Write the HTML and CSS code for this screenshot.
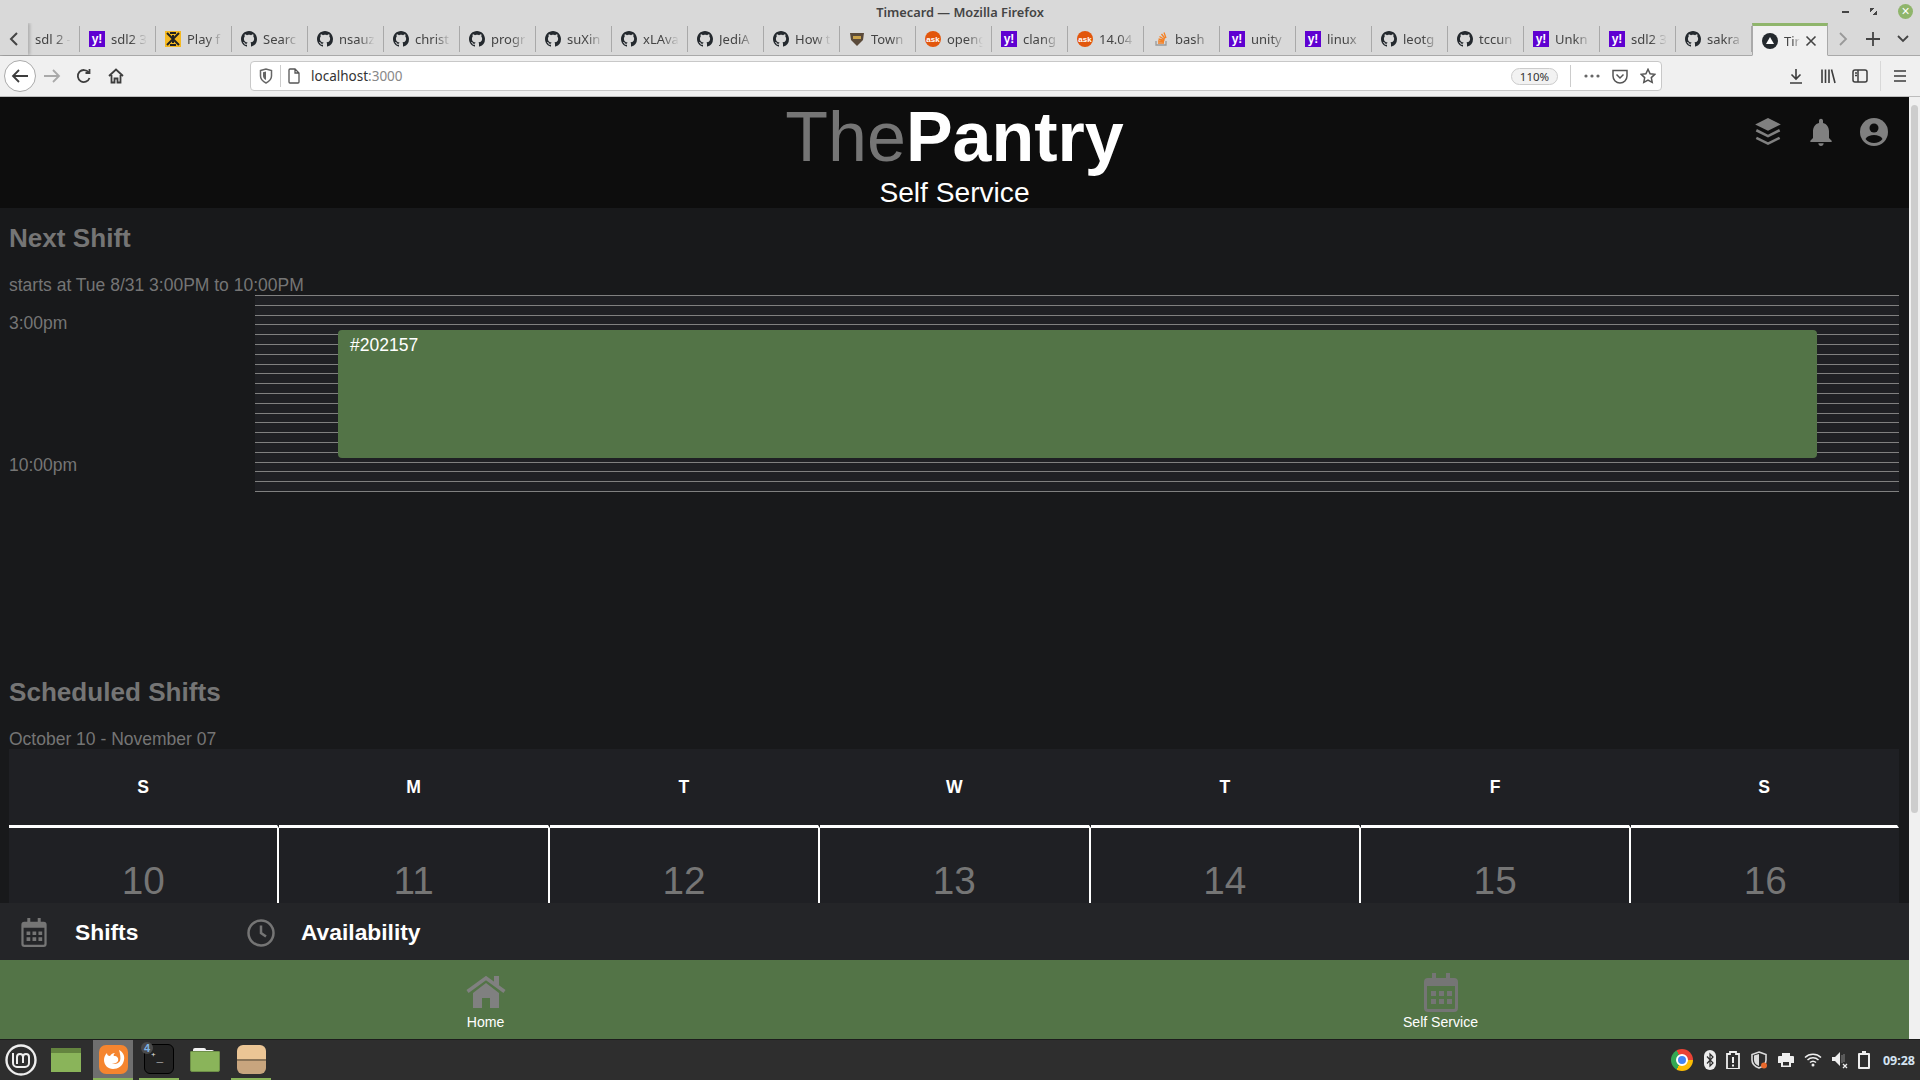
FILE: index.html
```html
<!DOCTYPE html>
<html lang="en">
<head>
    <meta charset="UTF-8">
    <meta name="viewport" content="width=device-width, initial-scale=1.0">
    <title>Timecard</title>
    <link rel="stylesheet" href="styles.css">
</head>
<body>
    <svg class="defs" width="0" height="0">
        <symbol id="gh" viewBox="0 0 16 16"><path d="M8 0C3.58 0 0 3.58 0 8c0 3.54 2.29 6.53 5.47 7.59.4.07.55-.17.55-.38 0-.19-.01-.82-.01-1.49-2.01.37-2.53-.49-2.69-.94-.09-.23-.48-.94-.82-1.13-.28-.15-.68-.52-.01-.53.63-.01 1.08.58 1.23.82.72 1.21 1.87.87 2.33.66.07-.52.28-.87.51-1.07-1.78-.2-3.64-.89-3.64-3.95 0-.87.31-1.59.82-2.15-.08-.2-.36-1.02.08-2.12 0 0 .67-.21 2.2.82.64-.18 1.32-.27 2-.27.68 0 1.36.09 2 .27 1.53-1.04 2.2-.82 2.2-.82.44 1.1.16 1.92.08 2.12.51.56.82 1.27.82 2.15 0 3.07-1.87 3.75-3.65 3.95.29.25.54.73.54 1.48 0 1.07-.01 1.93-.01 2.2 0 .21.15.46.55.38A8.013 8.013 0 0016 8c0-4.42-3.58-8-8-8z"/></symbol>
        <symbol id="calendar" viewBox="0 0 34 39">
            <path d="M8 0h4v5h10V0h4v5h4a4 4 0 0 1 4 4v26a4 4 0 0 1-4 4H4a4 4 0 0 1-4-4V9a4 4 0 0 1 4-4h4zM3 13v22a1 1 0 0 0 1 1h26a1 1 0 0 0 1-1V13z" fill-rule="evenodd"/>
            <path d="M7 18h5v5H7zM15 18h5v5h-5zM23 18h5v5h-5zM7 26h5v5H7zM15 26h5v5h-5zM23 26h5v5h-5z"/>
        </symbol>
    </svg>

    <div class="titlebar">
        <span class="win-title">Timecard — Mozilla Firefox</span>
        <div class="win-btns">
            <span class="win-min"></span>
            <span class="win-max"></span>
            <span class="win-close">×</span>
        </div>
    </div>

    <div class="tabstrip">
        <div class="tab-scroll">
            <svg width="10" height="16" viewBox="0 0 10 16"><path d="M8 2 2 8l6 6" fill="none" stroke="#444" stroke-width="2"/></svg>
        </div>
        <div class="tab tab-first"><span class="tab-text">sdl 2 -</span></div>
        <div class="tab"><span class="fav fav-y">y!</span><span class="tab-text">sdl2 3</span></div>
        <div class="tab"><span class="fav fav-play"><svg width="16" height="16" viewBox="0 0 16 16"><path d="M2 2l12 12M14 2 2 14M5 2h6M5 14h6M8 4v8" stroke="#222" stroke-width="2" fill="none"/></svg></span><span class="tab-text">Play f</span></div>
        <div class="tab"><svg class="fav"><use href="#gh"/></svg><span class="tab-text">Searc</span></div>
        <div class="tab"><svg class="fav"><use href="#gh"/></svg><span class="tab-text">nsauz</span></div>
        <div class="tab"><svg class="fav"><use href="#gh"/></svg><span class="tab-text">christ</span></div>
        <div class="tab"><svg class="fav"><use href="#gh"/></svg><span class="tab-text">progr</span></div>
        <div class="tab"><svg class="fav"><use href="#gh"/></svg><span class="tab-text">suXin</span></div>
        <div class="tab"><svg class="fav"><use href="#gh"/></svg><span class="tab-text">xLAva</span></div>
        <div class="tab"><svg class="fav"><use href="#gh"/></svg><span class="tab-text">JediA</span></div>
        <div class="tab"><svg class="fav"><use href="#gh"/></svg><span class="tab-text">How t</span></div>
        <div class="tab"><span class="fav"><svg width="16" height="16" viewBox="0 0 16 16"><path d="M1 2h14l-1 7-6 6-6-6z" fill="#5a4a3a"/><path d="M4 5h8v3H4z" fill="#c9a24a"/></svg></span><span class="tab-text">Town</span></div>
        <div class="tab"><span class="fav fav-ask">ask</span><span class="tab-text">openg</span></div>
        <div class="tab"><span class="fav fav-y">y!</span><span class="tab-text">clang</span></div>
        <div class="tab"><span class="fav fav-ask">ask</span><span class="tab-text">14.04</span></div>
        <div class="tab"><span class="fav"><svg width="16" height="16" viewBox="0 0 16 16"><path d="M3 10v4h10v-4" fill="none" stroke="#999" stroke-width="1.3"/><path d="M5 12h6M5 10l6 .5M5.5 8l6 1.5M6.5 5.5l5 3M8.5 3l3.500 4.500M11 1.500l2 5.500" stroke="#f48024" stroke-width="1.3"/></svg></span><span class="tab-text">bash</span></div>
        <div class="tab"><span class="fav fav-y">y!</span><span class="tab-text">unity</span></div>
        <div class="tab"><span class="fav fav-y">y!</span><span class="tab-text">linux</span></div>
        <div class="tab"><svg class="fav"><use href="#gh"/></svg><span class="tab-text">leotg</span></div>
        <div class="tab"><svg class="fav"><use href="#gh"/></svg><span class="tab-text">tccun</span></div>
        <div class="tab"><span class="fav fav-y">y!</span><span class="tab-text">Unkn</span></div>
        <div class="tab"><span class="fav fav-y">y!</span><span class="tab-text">sdl2 3</span></div>
        <div class="tab"><svg class="fav"><use href="#gh"/></svg><span class="tab-text">sakra</span></div>
        <div class="tab tab-active">
            <span class="fav"><svg width="16" height="16" viewBox="0 0 16 16"><circle cx="8" cy="8" r="8"/><path d="M8 4l4 7H4z" fill="#fff"/></svg></span>
            <span class="tab-text tab-text-short">Tir</span>
            <svg class="tab-x" width="12" height="12" viewBox="0 0 12 12"><path d="M1.500 1.500l9 9M10.500 1.500l-9 9" stroke="#444" stroke-width="1.600"/></svg>
        </div>
        <div class="strip-btn">
            <svg width="10" height="16" viewBox="0 0 10 16"><path d="M2 2l6 6-6 6" fill="none" stroke="#999" stroke-width="1.800"/></svg>
        </div>
        <div class="strip-btn">
            <svg width="16" height="16" viewBox="0 0 16 16"><path d="M8 1v14M1 8h14" stroke="#444" stroke-width="1.800"/></svg>
        </div>
        <div class="strip-btn">
            <svg width="14" height="10" viewBox="0 0 14 10"><path d="M2 2l5 5 5-5" fill="none" stroke="#444" stroke-width="1.800"/></svg>
        </div>
    </div>

    <div class="toolbar">
        <div class="tb-btn tb-back">
            <svg width="18" height="16" viewBox="0 0 18 16"><path d="M8 2 2 8l6 6M2 8h15" fill="none" stroke="#3d3d3d" stroke-width="1.800"/></svg>
        </div>
        <div class="tb-btn">
            <svg width="18" height="16" viewBox="0 0 18 16"><path d="M10 2l6 6-6 6M16 8H1" fill="none" stroke="#a9a9a9" stroke-width="1.800"/></svg>
        </div>
        <div class="tb-btn">
            <svg width="16" height="16" viewBox="0 0 16 16"><path d="M13.500 10a6 6 0 1 1-.8-5.500M13.500 1v4h-4" fill="none" stroke="#3d3d3d" stroke-width="1.800"/></svg>
        </div>
        <div class="tb-btn">
            <svg width="16" height="16" viewBox="0 0 16 16"><path d="M1 8l7-6.500L15 8M3.500 7v7.500h3v-4h3v4h3V7" fill="none" stroke="#3d3d3d" stroke-width="1.800"/></svg>
        </div>
        <div class="urlbar">
            <svg class="url-shield" width="14" height="16" viewBox="0 0 14 16"><path d="M1.500 2.500 7 1l5.500 1.500V8c0 3-2.500 5.500-5.500 7C4 13.500 1.500 11 1.500 8z" fill="none" stroke="#666" stroke-width="1.500"/><path d="M7 3.500V12C5 11 4 9.500 4 8V4.300z" fill="#666"/></svg>
            <span class="url-sep"></span>
            <svg class="url-page" width="14" height="16" viewBox="0 0 14 16"><path d="M2 2a1 1 0 0 1 1-1h5l4 4v9a1 1 0 0 1-1 1H3a1 1 0 0 1-1-1zM8 1v4h4" fill="none" stroke="#555" stroke-width="1.300"/></svg>
            <span class="url-text">localhost<span class="url-port">:3000</span></span>
            <span class="url-zoom">110%</span>
            <span class="url-sep url-sep-right"></span>
            <svg class="url-dots" width="16" height="4" viewBox="0 0 16 4"><circle cx="2" cy="2" r="1.600"/><circle cx="8" cy="2" r="1.600"/><circle cx="14" cy="2" r="1.600"/></svg>
            <svg class="url-pocket" width="16" height="16" viewBox="0 0 16 16"><path d="M1 2.500h14V8a7 7 0 0 1-14 0z" fill="none" stroke="#555" stroke-width="1.500"/><path d="M4.500 6.500 8 10l3.500-3.500" fill="none" stroke="#555" stroke-width="1.500"/></svg>
            <svg class="url-star" width="16" height="16" viewBox="0 0 16 16"><path d="M8 1.300l2.100 4.400 4.700.6-3.500 3.300.9 4.800L8 12l-4.200 2.400.9-4.800L1.200 6.300l4.700-.6z" fill="none" stroke="#555" stroke-width="1.500"/></svg>
        </div>
        <div class="tb-btn tb-download">
            <svg width="16" height="16" viewBox="0 0 16 16"><path d="M8 1v10M3.500 6.500 8 11l4.500-4.500M2 15h12" fill="none" stroke="#3d3d3d" stroke-width="1.600"/></svg>
        </div>
        <div class="tb-btn">
            <svg width="16" height="16" viewBox="0 0 16 16"><path d="M2 1.500V15M5.500 1.500V15M9 1.500V15M11.500 1.500 15 15" fill="none" stroke="#3d3d3d" stroke-width="1.600"/></svg>
        </div>
        <div class="tb-btn">
            <svg width="16" height="16" viewBox="0 0 16 16"><rect x="1" y="2" width="14" height="12" rx="2" fill="none" stroke="#3d3d3d" stroke-width="1.500"/><path d="M6 2v12M3 5h2M3 7.500h2" stroke="#3d3d3d" stroke-width="1.500"/></svg>
        </div>
        <span class="tb-sep"></span>
        <div class="tb-btn tb-menu">
            <svg width="14" height="12" viewBox="0 0 14 12"><path d="M1 1h12M1 6h12M1 11h12" stroke="#3d3d3d" stroke-width="1.600"/></svg>
        </div>
    </div>

    <div class="viewport">
        <div class="app">
            <header class="app-header">
                <div class="brand">
                    <h1 class="logo">The<b>Pantry</b></h1>
                    <div class="logo-sub">Self Service</div>
                </div>
                <div class="head-icons">
                    <svg class="head-icon" viewBox="0 0 24 24"><path d="M12 0l11 5.500L12 11 1 5.500z"/><path d="M2 10.500l10 5 10-5M2 17l10 5 10-5" fill="none" stroke="#808080" stroke-width="2.200"/></svg>
                    <svg class="head-icon" viewBox="3.500 1.500 17 21"><path d="M12 22.500c1.100 0 2-.9 2-2h-4c0 1.100.9 2 2 2zm6-6v-5c0-3.070-1.630-5.640-4.500-6.320V3.500c0-.83-.67-1.500-1.500-1.500s-1.500.67-1.500 1.500v1.680C7.640 5.860 6 8.420 6 11.500v5l-2 2v1h16v-1z"/></svg>
                    <svg class="head-icon" viewBox="0 0 28 28"><circle cx="14" cy="14" r="14"/><circle cx="14" cy="10" r="4.500" fill="#0d0d0d"/><path d="M5.500 21c1.500-3 5-4 8.500-4s7 1 8.500 4c-2 2.500-5 4-8.500 4s-6.500-1.500-8.500-4z" fill="#0d0d0d"/></svg>
                </div>
            </header>

            <main class="content">
                <h2 class="section-title">Next Shift</h2>
                <p class="section-sub">starts at Tue 8/31 3:00PM to 10:00PM</p>
                <div class="shift-row">
                    <div class="shift-times">
                        <div class="time-start">3:00pm</div>
                        <div class="time-end">10:00pm</div>
                    </div>
                    <div class="shift-chart">
                        <div class="shift-block">#202157</div>
                    </div>
                </div>

                <h2 class="section-title section-gap">Scheduled Shifts</h2>
                <p class="section-sub">October 10 - November 07</p>
                <div class="calendar">
                    <div class="cal-head">S</div>
                    <div class="cal-head">M</div>
                    <div class="cal-head">T</div>
                    <div class="cal-head">W</div>
                    <div class="cal-head">T</div>
                    <div class="cal-head">F</div>
                    <div class="cal-head">S</div>
                    <div class="cal-day">10</div>
                    <div class="cal-day">11</div>
                    <div class="cal-day">12</div>
                    <div class="cal-day">13</div>
                    <div class="cal-day">14</div>
                    <div class="cal-day">15</div>
                    <div class="cal-day">16</div>
                </div>
            </main>

            <div class="subnav">
                <div class="subnav-item subnav-shifts">
                    <svg class="subnav-cal"><use href="#calendar"/></svg>
                    <span>Shifts</span>
                </div>
                <div class="subnav-item">
                    <svg class="subnav-clock" viewBox="0 0 28 28"><circle cx="14" cy="14" r="12.500" fill="none" stroke="#757575" stroke-width="2.500"/><path d="M14 6.500V14l5 3.500" fill="none" stroke="#757575" stroke-width="2.500"/></svg>
                    <span>Availability</span>
                </div>
            </div>

            <nav class="bottom-nav">
                <div class="nav-item">
                    <svg class="nav-home" viewBox="0 0 40 32"><path d="M1.500 15.500 20 2l18.500 13.500" fill="none" stroke="#808080" stroke-width="3.500"/><path d="M28 0h5v9h-5z" fill="#808080"/><path d="M7 17 20 7l13 10v15h-9V22h-8v10H7z" fill="#808080"/></svg>
                    <span>Home</span>
                </div>
                <div class="nav-item">
                    <svg class="nav-cal"><use href="#calendar"/></svg>
                    <span>Self Service</span>
                </div>
            </nav>
        </div>
        <div class="scrollbar"><div class="scroll-thumb"></div></div>
    </div>

    <footer class="taskbar">
        <svg class="mint" width="32" height="32" viewBox="0 0 32 32"><circle cx="16" cy="16" r="14.500" fill="none" stroke="#eee" stroke-width="2.400"/><path d="M8 9v10a4 4 0 0 0 4 4h8a4 4 0 0 0 4-4v-6a3 3 0 0 0-6 0v6M18 13a3 3 0 0 0-6 0v7" fill="none" stroke="#eee" stroke-width="2"/></svg>
        <div class="task-slot task-files"><div class="files-window"></div></div>
        <div class="task-slot task-active task-run">
            <svg class="ff-icon" width="29" height="29" viewBox="0 0 29 29"><rect width="29" height="29" rx="7" fill="#f5852f"/><path d="M20 5c4 2 6 6 5 10-1 6-6 9-11 9-5 0-9-4-9-9 0-3 1-5 3-7 0 2 1 3 3 3 1-2 3-3 5-3-1 1-2 2-1 3 3 0 5 2 4 5-1 2-4 3-6 2 2 2 6 1 8-2 1-3 0-8-1-11z" fill="#fff"/></svg>
        </div>
        <div class="task-slot task-run task-term">
            <div class="term-icon">⁺_</div>
            <span class="term-badge">4</span>
        </div>
        <div class="task-slot task-folder"><div class="folder-tab"></div><div class="folder-body"></div></div>
        <div class="task-slot task-run task-box"><div class="box-icon"></div></div>
        <div class="tray">
            <div class="chrome"><div class="chrome-dot"></div></div>
            <svg width="12" height="20" viewBox="0 0 12 20"><rect width="12" height="20" rx="6" fill="#eee"/><path d="M3 6.500l6 6.500-3 3V4l3 3-6 6.500" fill="none" stroke="#2e2e2e" stroke-width="1.200"/></svg>
            <svg width="14" height="18" viewBox="0 0 14 18"><path d="M1 3h3V1h6v2h3v15H1z" fill="none" stroke="#eee" stroke-width="1.800"/><path d="M6 6h2v6H6zM6 13.500h2v2H6z" fill="#eee"/></svg>
            <svg width="18" height="18" viewBox="0 0 18 18"><path d="M9 1l7 2.500V9c0 4-3 6.500-7 8-4-1.500-7-4-7-8V3.500z" fill="none" stroke="#ddd" stroke-width="1.600"/><path d="M9 3v12c-3-1-5-3-5-6V4.500z" fill="#ddd"/><circle cx="14" cy="14.500" r="3" fill="#e9692c"/></svg>
            <svg width="16" height="14" viewBox="0 0 16 14"><path d="M4 0h8v3h3a1 1 0 0 1 1 1v6h-3v4H3v-4H0V4a1 1 0 0 1 1-1h3z" fill="#eee"/><path d="M5 9h6v3.500H5z" fill="#2e2e2e"/></svg>
            <svg width="18" height="14" viewBox="0 0 18 14"><path d="M1 4.500a11.500 11.500 0 0 1 16 0M3.500 7a8 8 0 0 1 11 0M6 9.500a4.500 4.500 0 0 1 6 0" fill="none" stroke="#eee" stroke-width="1.500"/><circle cx="9" cy="12" r="1.500" fill="#eee"/></svg>
            <svg width="16" height="18" viewBox="0 0 16 18"><path d="M0 6h3l5-5v14l-5-5H0z" fill="#eee"/><path d="M10 4v8M12 3v8" stroke="#777" stroke-width="1.200"/><path d="M11 13l4 4M15 13l-4 4" stroke="#eee" stroke-width="1.300"/></svg>
            <svg width="12" height="18" viewBox="0 0 12 18"><path d="M4 0h4v2h3a1 1 0 0 1 1 1v14a1 1 0 0 1-1 1H1a1 1 0 0 1-1-1V3a1 1 0 0 1 1-1h3z" fill="#eee"/><path d="M2 4h8v12H2z" fill="#2e2e2e"/></svg>
            <span class="clock">09:28</span>
        </div>
    </footer>
</body>
</html>
```

FILE: styles.css
```css
*{
    margin: 0;
    padding: 0;
    box-sizing: border-box;
}
html{
    font-size: 17.6px;
}
body{
    width: 1920px;
    height: 1080px;
    overflow: hidden;
    display: flex;
    flex-direction: column;
    font-family: "Liberation Sans", Arial, sans-serif;
    background-color: #18191b;
}
.defs{
    position: absolute;
}

/* window title */
.titlebar{
    height: 23px;
    flex: none;
    display: flex;
    align-items: center;
    justify-content: center;
    background-color: #d9d9d9;
    position: relative;
}
.win-title{
    font-family: "Noto Sans", sans-serif;
    font-size: 12.800px;
    font-weight: 600;
    color: #444;
}
.win-btns{
    position: absolute;
    right: 7px;
    top: 4px;
    display: flex;
    align-items: center;
    gap: 21px;
}
.win-min{
    width: 7px;
    height: 2px;
    background-color: #444;
}
.win-max{
    width: 7px;
    height: 7px;
    background: linear-gradient(135deg, #444 0 35%, transparent 35% 65%, #444 65%);
}
.win-close{
    width: 15px;
    height: 15px;
    border-radius: 50%;
    background-color: #8fb56b;
    color: #fff;
    font-size: 14px;
    line-height: 14px;
    text-align: center;
}

/* tabs */
.tabstrip{
    height: 33px;
    flex: none;
    display: flex;
    background-color: #d9d9d9;
    border-bottom: 1px solid #a9a9a9;
    font-family: "Noto Sans", sans-serif;
    font-size: 13px;
    color: #444;
}
.tab-scroll{
    width: 28px;
    display: flex;
    align-items: center;
    justify-content: center;
    box-shadow: 2px 0 3px rgba(0,0,0,.2);
}
.tab{
    width: 76px;
    flex: none;
    height: 26px;
    margin-top: 3px;
    padding-left: 9px;
    display: flex;
    align-items: center;
    border-right: 1px solid #a9a9a9;
    overflow: hidden;
}
.tab-first{
    width: 52px;
    padding-left: 7px;
}
.fav{
    width: 16px;
    height: 16px;
    flex: none;
    display: flex;
    align-items: center;
    justify-content: center;
    margin-right: 6px;
    fill: #24292e;
}
.fav-y{
    background-color: #5f01d1;
    color: #fff;
    font-family: "Liberation Sans", sans-serif;
    font-size: 12px;
    font-weight: bold;
}
.fav-ask{
    border-radius: 50%;
    background-color: #e2560c;
    color: #fff;
    font-family: "Liberation Sans", sans-serif;
    font-size: 8px;
    font-weight: bold;
}
.fav-play{
    background-color: #f5b921;
}
.tab-text{
    width: 36px;
    flex: none;
    white-space: nowrap;
    overflow: hidden;
    -webkit-mask-image: linear-gradient(to right, #000 55%, transparent);
    mask-image: linear-gradient(to right, #000 55%, transparent);
}
.tab-active{
    height: 33px;
    margin-top: 0;
    background-color: #f0f0f0;
    border-top: 3px solid #8fb56b;
    border-left: 1px solid #a9a9a9;
    border-right: 1px solid #a9a9a9;
    border-bottom: 1px solid #f0f0f0;
    padding-left: 9px;
}
.tab-text-short{
    width: 16px;
}
.tab-x{
    margin-left: 5px;
    flex: none;
}
.strip-btn{
    width: 30px;
    display: flex;
    align-items: center;
    justify-content: center;
}

/* toolbar */
.toolbar{
    height: 41px;
    flex: none;
    display: flex;
    align-items: center;
    padding-left: 4px;
    background-color: #f0f0f0;
    border-bottom: 1px solid #bdbdbd;
}
.tb-btn{
    width: 32px;
    height: 32px;
    flex: none;
    display: flex;
    align-items: center;
    justify-content: center;
}
.tb-back{
    background-color: #fff;
    border: 1px solid #aaa;
    border-radius: 50%;
}
.urlbar{
    width: 1412px;
    height: 30px;
    margin-left: 118px;
    display: flex;
    align-items: center;
    background-color: #fff;
    border: 1px solid #c8c8c8;
    border-radius: 4px;
    font-family: "Noto Sans", sans-serif;
    font-size: 13.500px;
    color: #333;
}
.url-shield{
    margin-left: 8px;
    flex: none;
}
.url-sep{
    width: 1px;
    height: 22px;
    margin-left: 7px;
    background-color: #ccc;
}
.url-page{
    margin-left: 6px;
}
.url-text{
    margin-left: 10px;
}
.url-port{
    color: #888;
}
.url-zoom{
    margin-left: auto;
    width: 47px;
    height: 17px;
    border: 1px solid #ccc;
    border-radius: 9px;
    background-color: #f2f2f2;
    font-size: 11.500px;
    line-height: 15px;
    text-align: center;
}
.url-sep-right{
    margin-left: 12px;
}
.url-dots{
    margin-left: 13px;
    fill: #666;
}
.url-pocket{
    margin-left: 12px;
}
.url-star{
    margin-left: 12px;
    margin-right: 5px;
}
.tb-download{
    margin-left: 118px;
}
.tb-sep{
    width: 1px;
    height: 30px;
    margin-left: 4px;
    background-color: #d8d8d8;
}
.tb-menu{
    margin-left: 3px;
}

/* page */
.viewport{
    flex: 1;
    min-height: 0;
    display: flex;
}
.app{
    width: 1909px;
    flex: none;
    display: flex;
    flex-direction: column;
}
.scrollbar{
    flex: 1;
    background-color: #f0f0f0;
    padding: 8px 2px 0 2px;
}
.scroll-thumb{
    height: 708px;
    border-radius: 4px;
    background-color: #cdcdcd;
}
.app-header{
    height: 111px;
    flex: none;
    display: grid;
    grid-template-columns: 1fr auto 1fr;
    background-color: #0d0d0d;
    color: #fff;
}
.brand{
    grid-column: 2;
    text-align: center;
}
.logo{
    margin-top: 5px;
    font-size: 70px;
    font-weight: normal;
    line-height: 70px;
    color: #757575;
}
.logo b{
    color: #fff;
}
.logo-sub{
    margin-top: 5px;
    font-size: 1.6rem;
    line-height: 31px;
}
.head-icons{
    grid-column: 3;
    justify-self: end;
    display: flex;
    gap: 25px;
    margin-top: 21px;
    padding-right: 21px;
}
.head-icon{
    width: 28px;
    height: 28px;
    fill: #808080;
}
.content{
    flex: 1;
    min-height: 0;
    overflow: hidden;
    padding: 0 10px 0 9px;
    color: #757575;
}
.section-title{
    margin-top: 15px;
    font-size: 26.100px;
    line-height: 30px;
}
.section-gap{
    margin-top: 185px;
}
.section-sub{
    margin-top: 22px;
    font-size: 17.500px;
    line-height: 20px;
}
.shift-row{
    display: flex;
}
.shift-times{
    width: 246px;
    flex: none;
    padding-top: 18px;
    font-size: 17.500px;
    line-height: 20px;
}
.time-end{
    margin-top: 122px;
}
.shift-chart{
    flex: 1;
    height: 197px;
    position: relative;
    background-color: #1f2024;
    background-image: repeating-linear-gradient(#808080 0 1px, transparent 1px 9.800px);
}
.shift-block{
    position: absolute;
    left: 83px;
    right: 82px;
    top: 35px;
    height: 128px;
    padding: 5px 12px;
    border-radius: 4px;
    background-color: #537447;
    color: #fff;
    font-size: 17.500px;
    line-height: 20px;
}
.calendar{
    display: grid;
    grid-template-columns: repeat(6, 270.400px) 1fr;
    background-color: #1f2024;
}
.cal-head{
    height: 79px;
    padding-top: 28px;
    border-bottom: 3px solid #fff;
    border-right: 2px solid transparent;
    text-align: center;
    color: #fff;
    font-size: 1rem;
    font-weight: bold;
    line-height: 20px;
}
.cal-day{
    height: 120px;
    padding-top: 31px;
    border-right: 2px solid #fff;
    text-align: center;
    font-size: 2.2rem;
    line-height: 44px;
}
.cal-day:last-child{
    border-right: none;
}
.subnav{
    height: 57px;
    flex: none;
    display: flex;
    align-items: center;
    padding: 2px 0 0 21px;
    background-color: #242528;
    color: #fff;
    font-size: 22.800px;
    font-weight: bold;
}
.subnav-item{
    display: flex;
    align-items: center;
}
.subnav-shifts{
    width: 226px;
}
.subnav-cal{
    width: 26px;
    height: 29px;
    margin-right: 28px;
    fill: #757575;
}
.subnav-clock{
    width: 28px;
    height: 28px;
    margin-right: 26px;
}
.bottom-nav{
    height: 79px;
    flex: none;
    display: grid;
    grid-template-columns: 955px 955px;
    padding-left: 8px;
    overflow: hidden;
    background-color: #537447;
    color: #fff;
    font-size: .8rem;
}
.nav-item{
    display: flex;
    flex-direction: column;
    align-items: center;
    justify-content: flex-end;
    padding-bottom: 9px;
    line-height: 16px;
}
.nav-home{
    width: 40px;
    height: 32px;
    margin-bottom: 6px;
}
.nav-cal{
    width: 34px;
    height: 39px;
    margin-bottom: 2px;
    fill: #757575;
}

/* desktop panel */
.taskbar{
    height: 41px;
    flex: none;
    display: flex;
    align-items: center;
    padding-left: 5px;
    background-color: #2e2e2e;
    border-top: 1px solid #1d1d1d;
}
.mint{
    flex: none;
}
.task-slot{
    width: 40px;
    height: 40px;
    flex: none;
    display: flex;
    align-items: center;
    justify-content: center;
    position: relative;
    margin-right: 6px;
}
.task-files{
    margin-left: 9px;
    margin-right: 7px;
}
.task-run{
    border-bottom: 2px solid #8ab45a;
}
.task-active{
    background-color: #6f6f6f;
}
.files-window{
    width: 30px;
    height: 24px;
    background: linear-gradient(#64843f 0 5px, #8ab45a 5px);
}
.term-icon{
    width: 30px;
    height: 30px;
    border: 1px solid #000;
    border-radius: 6px;
    background-color: #222;
    color: #eee;
    font-family: "DejaVu Sans Mono", monospace;
    font-size: 11px;
    line-height: 24px;
    padding-left: 5px;
}
.term-badge{
    position: absolute;
    left: 2px;
    top: 2px;
    width: 12px;
    height: 12px;
    border-radius: 50%;
    background-color: #4a4a4a;
    color: #7fb5e6;
    font-size: 11px;
    font-weight: bold;
    line-height: 12px;
    text-align: center;
}
.task-folder{
    flex-direction: column;
    align-items: flex-start;
    margin-left: -6px;
    width: 52px;
    padding-left: 11px;
}
.folder-tab{
    width: 13px;
    height: 4px;
    margin-left: 3px;
    border-radius: 2px 2px 0 0;
    background-color: #f2f2f2;
    box-shadow: 8px 2px 0 -0px #f2f2f2;
}
.folder-body{
    width: 30px;
    height: 21px;
    margin-top: -1px;
    border-radius: 1px 1px 2px 2px;
    background-color: #8ab45a;
    border: 1px solid #6d8f47;
    position: relative;
}
.task-box{
    margin-left: -6px;
}
.box-icon{
    width: 29px;
    height: 29px;
    border-radius: 6px;
    background: linear-gradient(#ebc595 0 50%, #8a7458 50% 54%, #c8a57e 54%);
}
.tray{
    margin-left: auto;
    margin-right: 5px;
    display: flex;
    align-items: center;
    gap: 10px;
}
.chrome{
    width: 22px;
    height: 22px;
    margin-right: 1px;
    display: flex;
    align-items: center;
    justify-content: center;
    border-radius: 50%;
    background: conic-gradient(from -30deg, #ea4335 0 120deg, #fbbc05 120deg 240deg, #34a853 240deg);
}
.chrome-dot{
    width: 8px;
    height: 8px;
    border: 2px solid #fff;
    border-radius: 50%;
    background-color: #4285f4;
    box-sizing: content-box;
}
.clock{
    margin-left: 3px;
    color: #d5e4f2;
    font-family: "Noto Sans", sans-serif;
    font-size: 12.500px;
    font-weight: bold;
}
```
